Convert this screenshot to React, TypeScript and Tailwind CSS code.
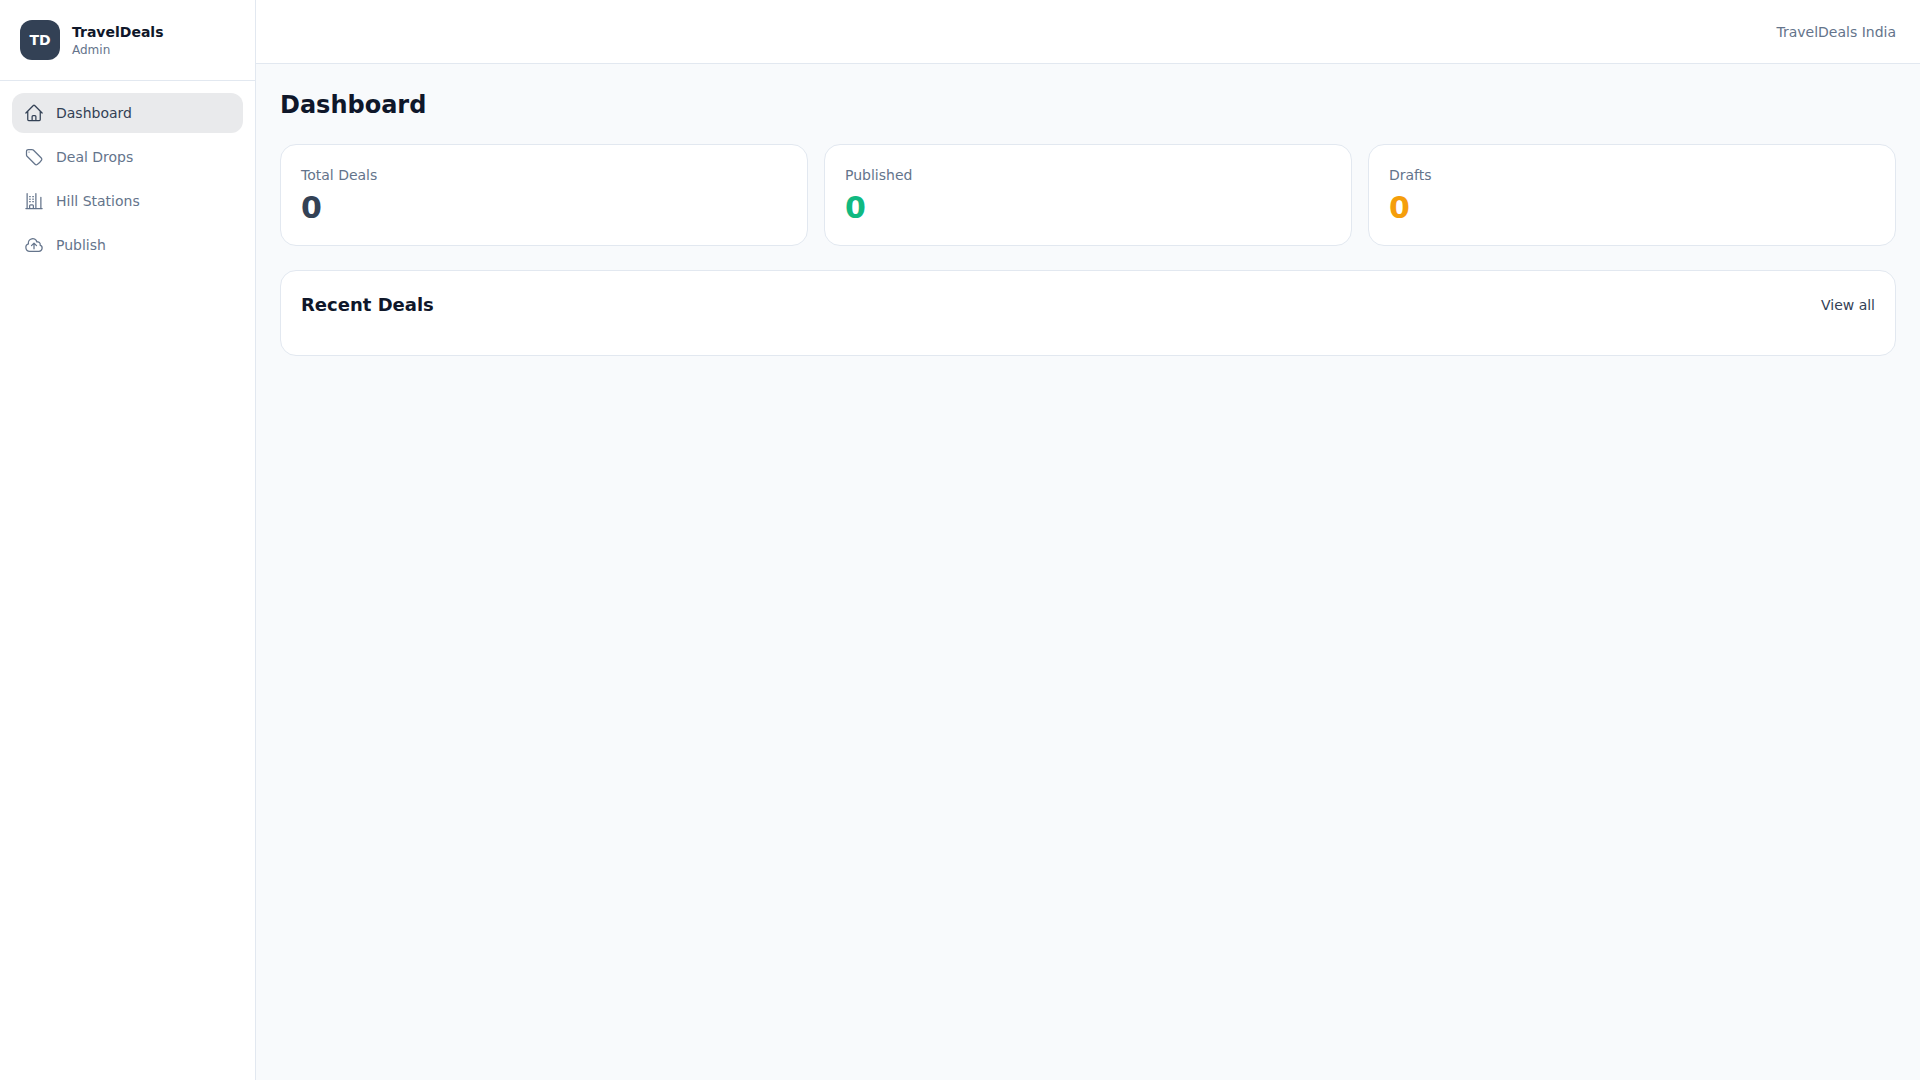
import {
  HiOutlineCloudArrowUp,
  HiOutlineHome,
  HiOutlineTag,
} from "react-icons/hi2";

const HillIcon = ({ className }: { className?: string }) => (
  <svg className={className} fill="none" viewBox="0 0 24 24" strokeWidth={1.5} stroke="currentColor">
    <path
      strokeLinecap="round"
      strokeLinejoin="round"
      d="M2.25 21h19.5m-18-18v18m10.5-18v18m6-13.5V21M6.75 6.75h.75m-.75 3h.75m-.75 3h.75m3-6h.75m-.75 3h.75m-.75 3h.75M6.75 21v-3.375c0-.621.504-1.125 1.125-1.125h2.25c.621 0 1.125.504 1.125 1.125V21"
    />
  </svg>
);

const NAV = [
  { label: "Dashboard", icon: HiOutlineHome, active: true },
  { label: "Deal Drops", icon: HiOutlineTag, active: false },
  { label: "Hill Stations", icon: HillIcon, active: false },
  { label: "Publish", icon: HiOutlineCloudArrowUp, active: false },
];

const STATS = [
  { label: "Total Deals", value: 0, color: "text-[#334155]" },
  { label: "Published", value: 0, color: "text-[#10b981]" },
  { label: "Drafts", value: 0, color: "text-[#f59e0b]" },
];

export default function App() {
  return (
    <div className="flex min-h-screen bg-[#f8fafc] font-['DejaVu_Sans',sans-serif] antialiased">
      <aside className="w-64 shrink-0 border-r border-[#e2e8f0] bg-white">
        <div className="flex items-center gap-3 border-b border-[#e2e8f0] p-5">
          <div className="flex h-10 w-10 items-center justify-center rounded-xl bg-[#334155] text-sm font-bold text-white">
            TD
          </div>
          <div>
            <div className="text-sm leading-5 font-bold text-[#0f172a]">TravelDeals</div>
            <div className="text-xs leading-4 text-[#64748b]">Admin</div>
          </div>
        </div>
        <nav className="flex flex-col gap-1 p-3">
          {NAV.map(({ label, icon: Icon, active }) => (
            <a
              key={label}
              className={`flex h-10 items-center gap-3 rounded-xl px-3 text-sm ${
                active ? "bg-[#e9eaec] text-[#334155]" : "text-[#64748b]"
              }`}
            >
              <Icon className="h-5 w-5" />
              {label}
            </a>
          ))}
        </nav>
      </aside>
      <div className="flex min-w-0 flex-1 flex-col">
        <header className="flex h-16 items-center justify-end border-b border-[#e2e8f0] bg-white px-6">
          <span className="text-sm text-[#64748b]">TravelDeals India</span>
        </header>
        <main className="p-6">
          <h1 className="mb-[22px] text-2xl leading-[34px] font-bold text-[#0f172a]">Dashboard</h1>
          <div className="mb-6 grid grid-cols-3 gap-4">
            {STATS.map((s) => (
              <div key={s.label} className="rounded-2xl border border-[#e2e8f0] bg-white p-5">
                <div className="text-sm text-[#64748b]">{s.label}</div>
                <div className={`mt-[6px] text-3xl leading-[34px] font-bold ${s.color}`}>{s.value}</div>
              </div>
            ))}
          </div>
          <div className="rounded-2xl border border-[#e2e8f0] bg-white p-5">
            <div className="mb-4 flex items-center justify-between">
              <h2 className="text-lg font-semibold text-[#0f172a]">Recent Deals</h2>
              <a className="text-sm text-[#334155]">View all</a>
            </div>
          </div>
        </main>
      </div>
    </div>
  );
}
